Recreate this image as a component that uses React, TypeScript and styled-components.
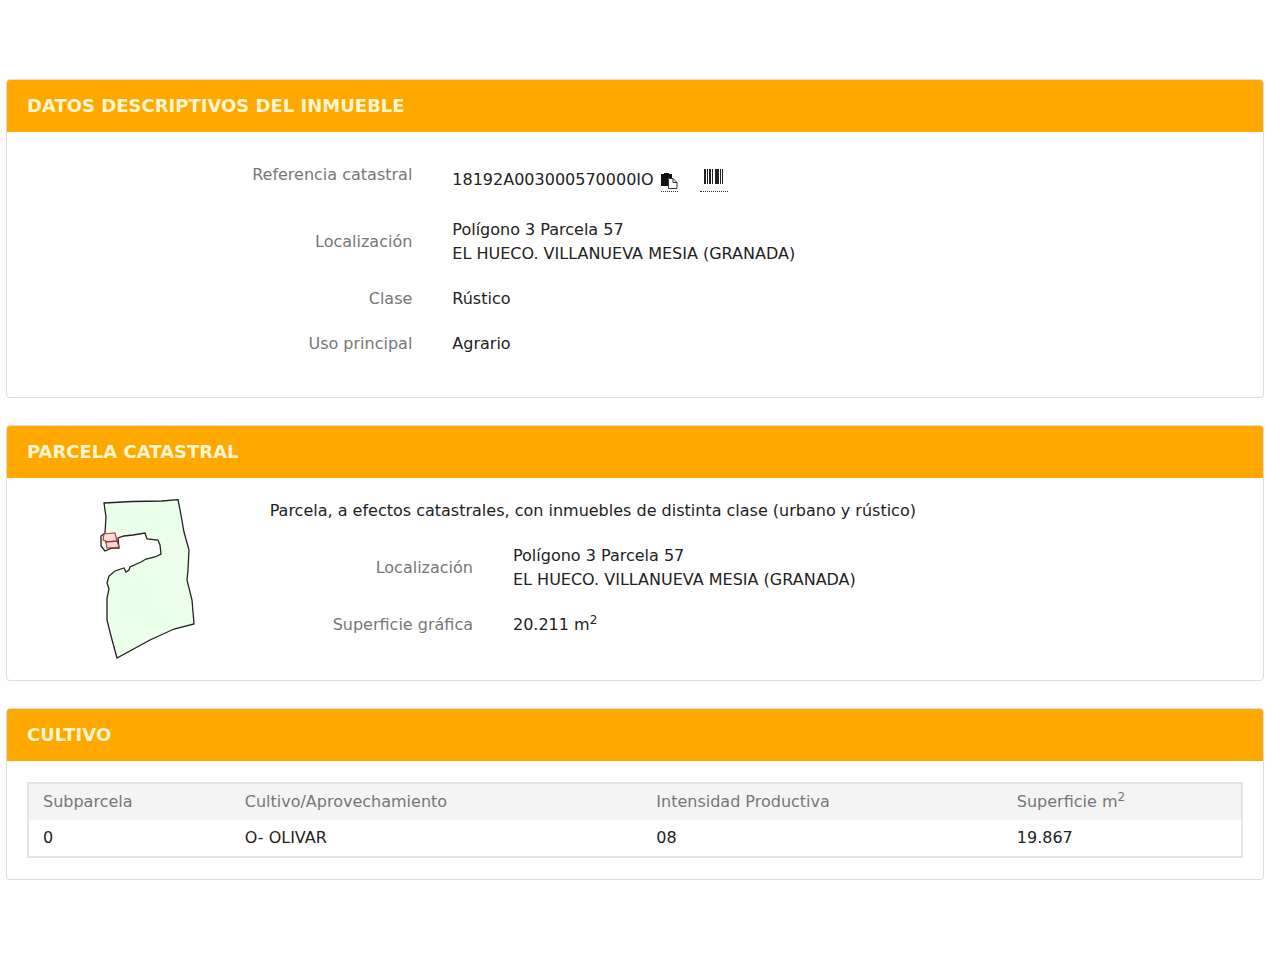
import React from 'react';
import styled, { createGlobalStyle } from 'styled-components';

const GlobalStyle = createGlobalStyle`
  * { box-sizing: border-box; }
  body {
    margin: 0;
    background: #fefefe;
    color: #222;
    font: 16px/24px "DejaVu Sans", Verdana, sans-serif;
  }
`;

const Page = styled.main`
  display: flex;
  flex-direction: column;
  gap: 27px;
  padding: 79px 16px 79px 6px;
`;

const Card = styled.section`
  border: 1px solid #ddd;
  border-radius: 4px;
  background: #fff;
  overflow: hidden;
`;

const CardTitle = styled.h2`
  margin: 0;
  padding: 14px 20px;
  background: #ffa800;
  color: #fff6d0;
  font-size: 18px;
  line-height: 24px;
  font-weight: bold;
  text-transform: uppercase;
`;

const CardBody = styled.div<{ $roomy?: boolean }>`
  padding: ${(p) => (p.$roomy ? '31px 20px 41px' : '21px 20px')};
`;

const Fields = styled.dl`
  display: flex;
  flex-direction: column;
  gap: 21px;
  margin: 0;
`;

const Field = styled.div<{ $label: string; $top?: boolean }>`
  display: grid;
  grid-template-columns: ${(p) => p.$label} 1fr;
  align-items: ${(p) => (p.$top ? 'start' : 'center')};
`;

const Label = styled.dt`
  padding-right: 20px;
  color: #777;
  text-align: right;
`;

const Value = styled.dd`
  margin: 0;
  padding-left: 20px;
`;

const Reference = styled.div`
  display: flex;
  align-items: center;
  min-height: 34px;
`;

const IconButton = styled.button<{ $wide?: boolean }>`
  display: flex;
  justify-content: center;
  align-items: ${(p) => (p.$wide ? 'start' : 'end')};
  width: ${(p) => (p.$wide ? '28px' : '17px')};
  height: 23px;
  margin-left: ${(p) => (p.$wide ? '22px' : '7px')};
  padding: ${(p) => (p.$wide ? '0' : '0 0 2px')};
  border: 0;
  border-bottom: 1px dotted #333;
  background: none;
  color: #222;
  cursor: pointer;
`;

const Parcel = styled.div`
  display: grid;
  grid-template-columns: 1fr 5fr;
`;

const MapCell = styled.div`
  display: flex;
  justify-content: flex-end;
  align-items: flex-start;
  padding-right: 20px;
`;

const ParcelInfo = styled.div`
  padding: 0 20px;
`;

const Note = styled.p`
  margin: 0 0 21px;
  padding-left: 20px;
`;

const Sup = styled.sup`
  font-size: 12px;
  line-height: 0;
`;

const Table = styled.table`
  width: 100%;
  border: 2px solid #e4e4e4;
  border-collapse: collapse;
  table-layout: fixed;
  text-align: left;
`;

const HeadCell = styled.th<{ $width?: string }>`
  width: ${(p) => p.$width ?? 'auto'};
  padding: 6px 14px;
  background: #f4f4f4;
  color: #777;
  font-weight: normal;
`;

const Cell = styled.td`
  padding: 6px 14px;
`;

const Squared = () => <Sup>2</Sup>;

const CopyIcon = () => (
  <svg width="17" height="16" viewBox="0 0 17 16" aria-hidden="true">
    <path d="M0 1h3V0h5v1h3v4H7v8H0z" fill="#111" />
    <path d="M7.5 5.5h4.500l4 4v6h-8.500z" fill="#fff" stroke="#333" />
    <path d="M12 5.500v4h4" fill="none" stroke="#333" />
  </svg>
);

const BarcodeIcon = () => (
  <svg width="19" height="15" viewBox="0 0 19 15" aria-hidden="true">
    <path d="M0 0h2v15H0zM3 0h1v15H3zM5 0h2v15H5zM8 0h1v15H8zM11 0h4v15h-4zM16 0h1v15h-1zM18 0h1v15h-1z" fill="#222" />
  </svg>
);

const ParcelMap = () => (
  <svg width="120" height="160" viewBox="90 499 120 160" role="img" aria-label="Plano de la parcela">
    <path
      d="M104 503L132 501.500L162 501L178 499.600L181 515L184 532L189 550L188 570L187 580L192 600L194 624L174 629L150 640L117 658L111 636L107 620L107 598L109 589L107 583L109 576L115 571L124 568L126 572L129 570L130 567L141 562L146 559L155 557L161 554L160 545L158 540L147 539L145 533L133 535L124 536L118 538L119 548L112 548L105 551L101 546L101 536L105 533L106 517Z"
      fill="#ebffeb"
      stroke="#222"
      strokeWidth="1.300"
    />
    <path d="M104 534L115 533L117 541L119 547L107 548L106 541L103 540Z" fill="#ffe0e0" stroke="#c23a44" strokeWidth="1.200" />
    <path d="M105 542L118 541" fill="none" stroke="#a32a34" strokeWidth="1.400" />
  </svg>
);

const Address = () => (
  <>
    Polígono 3 Parcela 57
    <br />
    EL HUECO. VILLANUEVA MESIA (GRANADA)
  </>
);

export default function App() {
  return (
    <>
      <GlobalStyle />
      <Page>
        <Card>
          <CardTitle>Datos descriptivos del inmueble</CardTitle>
          <CardBody $roomy>
            <Fields>
              <Field $label="33.333%" $top>
                <Label>Referencia catastral</Label>
                <Value>
                  <Reference>
                    18192A003000570000IO
                    <IconButton type="button" aria-label="Copiar referencia">
                      <CopyIcon />
                    </IconButton>
                    <IconButton type="button" aria-label="Código de barras" $wide>
                      <BarcodeIcon />
                    </IconButton>
                  </Reference>
                </Value>
              </Field>
              <Field $label="33.333%">
                <Label>Localización</Label>
                <Value><Address /></Value>
              </Field>
              <Field $label="33.333%">
                <Label>Clase</Label>
                <Value>Rústico</Value>
              </Field>
              <Field $label="33.333%">
                <Label>Uso principal</Label>
                <Value>Agrario</Value>
              </Field>
            </Fields>
          </CardBody>
        </Card>

        <Card>
          <CardTitle>Parcela catastral</CardTitle>
          <CardBody>
            <Parcel>
              <MapCell><ParcelMap /></MapCell>
              <ParcelInfo>
                <Note>Parcela, a efectos catastrales, con inmuebles de distinta clase (urbano y rústico)</Note>
                <Fields>
                  <Field $label="25%">
                    <Label>Localización</Label>
                    <Value><Address /></Value>
                  </Field>
                  <Field $label="25%">
                    <Label>Superficie gráfica</Label>
                    <Value>20.211 m<Squared /></Value>
                  </Field>
                </Fields>
              </ParcelInfo>
            </Parcel>
          </CardBody>
        </Card>

        <Card>
          <CardTitle>Cultivo</CardTitle>
          <CardBody>
            <Table>
              <thead>
                <tr>
                  <HeadCell scope="col" $width="16.7%">Subparcela</HeadCell>
                  <HeadCell scope="col" $width="33.9%">Cultivo/Aprovechamiento</HeadCell>
                  <HeadCell scope="col" $width="29.7%">Intensidad Productiva</HeadCell>
                  <HeadCell scope="col">Superficie m<Squared /></HeadCell>
                </tr>
              </thead>
              <tbody>
                <tr>
                  <Cell>0</Cell>
                  <Cell>O- OLIVAR</Cell>
                  <Cell>08</Cell>
                  <Cell>19.867</Cell>
                </tr>
              </tbody>
            </Table>
          </CardBody>
        </Card>
      </Page>
    </>
  );
}
